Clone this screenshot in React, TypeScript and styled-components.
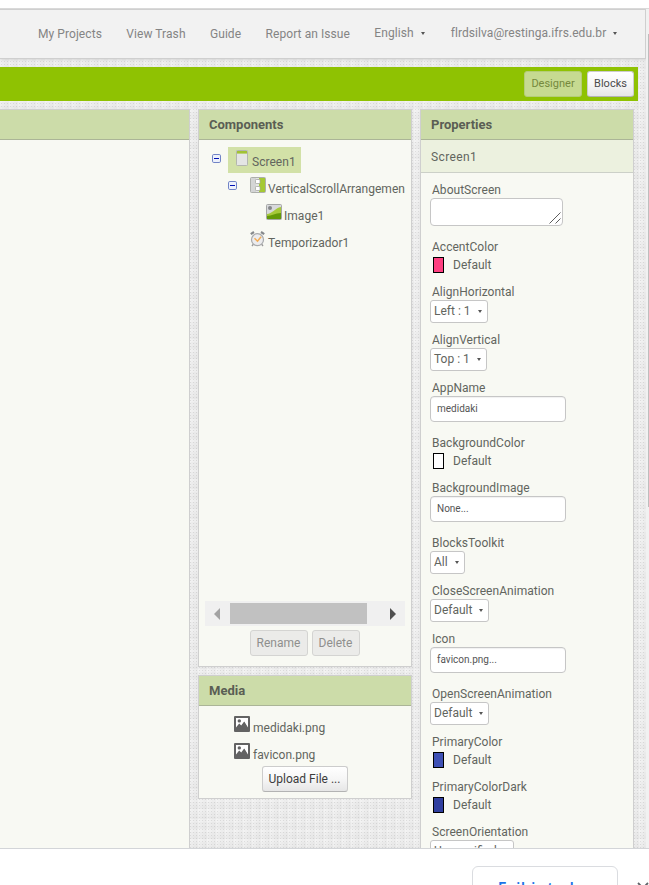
import React from 'react';
import styled, { createGlobalStyle, css } from 'styled-components';

const GlobalStyle = createGlobalStyle`
  * { box-sizing: border-box; }
  html, body { margin: 0; padding: 0; overflow: hidden; background: #fff; }
  body { font: 12px/18px Roboto, "Liberation Sans", sans-serif; color: #62655e; }
`;

const raisedButton = css`
  background: linear-gradient(#ffffff, #f6f6f6 50%, #e6e6e6);
  border: 1px solid #ccc;
  border-bottom-color: #b3b3b3;
  color: #3c3c3c;
`;

const Window = styled.div`
  display: flex;
  flex-direction: column;
  width: 649px;
  height: 885px;
  padding-top: 8px;
  overflow: hidden;
`;

const Viewport = styled.div`
  display: flex;
  flex: none;
  height: 841px;
  border-top: 1px solid #d9d9d9;
  border-bottom: 1px solid #d3d5d8;
  overflow: hidden;
`;

const Page = styled.div`
  width: 646px;
  background-color: #ececec;
  background-image:
    radial-gradient(circle at 1.5px 1.5px, rgba(0, 0, 0, 0.09) 0.7px, transparent 0.8px),
    repeating-linear-gradient(90deg, rgba(255, 255, 255, 0.2) 0 2px, transparent 2px 5px, rgba(0, 0, 0, 0.012) 5px 9px),
    repeating-linear-gradient(rgba(255, 255, 255, 0.2) 0 3px, transparent 3px 7px, rgba(0, 0, 0, 0.012) 7px 10px);
  background-size: 3px 3px, auto, auto;
  overflow: hidden;
`;

const ScrollTrack = styled.div`
  width: 3px;
  padding: 25px 0 0 2px;
  background: #f1f1f1;
`;

const ScrollThumb = styled.div`
  height: 473px;
  background: #bdbdbd;
`;

const TopBar = styled.nav`
  display: flex;
  align-items: center;
  width: 646px;
  height: 50px;
  padding-left: 38px;
  background: #f2f2f2;
  border: solid #cfcfcf;
  border-width: 1px 1px 1px 0;
  color: #848484;
  letter-spacing: 0.07px;
  box-shadow: 0 1px 3px rgba(0, 0, 0, 0.12);
`;

const NavLink = styled.a<{ $gap?: number; $menu?: boolean }>`
  display: flex;
  align-items: center;
  gap: 7px;
  margin-right: ${(p) => p.$gap ?? 24.4}px;
  padding-bottom: ${(p) => (p.$menu ? 2 : 0)}px;
  white-space: nowrap;
`;

const EditorBar = styled.header`
  display: flex;
  align-items: center;
  justify-content: flex-end;
  gap: 5px;
  width: 638px;
  height: 34px;
  margin-top: 8px;
  padding-right: 4px;
  background: #8fc202;
`;

const ViewButton = styled.button<{ $active?: boolean }>`
  width: ${(p) => (p.$active ? 58 : 47)}px;
  height: 26px;
  padding: 0 0 1px;
  ${raisedButton}
  border-radius: 3px;
  font: 11px/20px Roboto, sans-serif;
  color: #4a4a4a;
  ${(p) => p.$active && css`
    background: #c6da91;
    border-color: #b4cd78;
    color: #75893d;
  `}
`;

const Workspace = styled.main`
  display: flex;
  align-items: flex-start;
  gap: 8px;
  margin-top: 8px;
`;

const Column = styled.div`
  display: flex;
  flex-direction: column;
  gap: 8px;
`;

const Panel = styled.section<{ $w: number; $h: number; $flush?: boolean }>`
  width: ${(p) => p.$w}px;
  height: ${(p) => p.$h}px;
  background: #f8f9f3;
  border: 1px solid #cfcfcf;
  ${(p) => p.$flush && 'border-left: 0;'}
`;

const PanelTitle = styled.h2`
  height: 30px;
  margin: 0;
  padding: 0 10px;
  background: #ccdca9;
  border-bottom: 1px solid #abb597;
  font-size: 13px;
  line-height: 29px;
  font-weight: 700;
  color: #5a5e54;
`;

const PanelSubtitle = styled.div`
  height: 33px;
  padding-left: 10px;
  background: #ecf1df;
  border-bottom: 1px solid #ccd0c8;
  line-height: 34px;
  letter-spacing: 0.4px;
`;

const Tree = styled.div`
  height: 461px;
  padding-top: 6px;
  overflow: hidden;
`;

const TreeItem = styled.div<{ $indent: number }>`
  display: flex;
  align-items: center;
  height: 27px;
  padding-left: ${(p) => p.$indent}px;
  padding-right: 5px;
`;

const Toggle = styled.svg`
  flex: none;
  width: 9px;
  height: 9px;
  margin-right: 7px;
  margin-top: -3px;
`;

const NodeLabel = styled.span<{ $selected?: boolean }>`
  display: flex;
  align-items: center;
  height: 26px;
  overflow: hidden;
  padding: 0 5px 0 6px;
  background: ${(p) => (p.$selected ? '#d2e1a7' : 'transparent')};
  white-space: nowrap;

  svg { flex: none; width: 16px; height: 16px; margin: -4px 2px 0 0; }
  span { padding-top: 4px; letter-spacing: 0.03px; }
`;

const HorizontalScroll = styled.div`
  display: flex;
  align-items: center;
  width: 200px;
  height: 25px;
  margin-left: 6px;
  padding: 2px 8px 2px 9px;
  background: #f0f0f0;
`;

const HorizontalThumb = styled.div`
  width: 137px;
  height: 21px;
  margin: 0 23px 0 10px;
  background: #c1c1c1;
`;

const Actions = styled.div`
  display: flex;
  justify-content: center;
  gap: 4px;
  margin-top: 4px;
  padding-right: 1px;
`;

const ActionButton = styled.button<{ $w: number }>`
  width: ${(p) => p.$w}px;
  height: 26px;
  padding: 0 0 1px;
  ${raisedButton}
  border-radius: 3px;
  font: 12px/20px Roboto, sans-serif;
  white-space: nowrap;

  &:disabled {
    background: #ebebe9;
    border-color: #d4d4d2;
    color: #8f8f8d;
  }
`;

const MediaList = styled.div`
  padding: 8px 0 0 35px;
`;

const MediaItem = styled.div`
  display: flex;
  align-items: center;
  gap: 3px;
  height: 27px;

  svg { flex: none; margin-top: -8px; }
`;

const UploadRow = styled.div`
  display: flex;
  justify-content: center;
  margin-top: -2px;
  padding-right: 1px;
`;

const PropertyList = styled.div`
  padding: 7px 9px 0;
`;

const Property = styled.div<{ $h: number }>`
  height: ${(p) => p.$h}px;
`;

const PropertyName = styled.label`
  display: block;
  height: 18px;
  padding-left: 2px;
  line-height: 20px;
  letter-spacing: 0.03px;
`;

const TextArea = styled.div`
  display: flex;
  align-items: flex-end;
  justify-content: flex-end;
  width: 133px;
  height: 28px;
  padding: 1px;
  background: #fff;
  border: 1px solid #c6c6c6;
  border-radius: 4px;
`;

const TextBox = styled.div`
  width: 136px;
  height: 26px;
  padding-left: 6px;
  background: #fff;
  border: 1px solid #c6c6c6;
  border-radius: 4px;
  box-shadow: inset 0 1px 1px rgba(0, 0, 0, 0.06);
  font-size: 10px;
  line-height: 24px;
  color: #555;
`;

const SelectBox = styled.button`
  display: flex;
  align-items: center;
  gap: 7px;
  height: 23px;
  padding: 0 5px 1px 3px;
  background: #fff;
  border: 1px solid #c6c6c6;
  border-radius: 3px;
  font: 12px/18px Roboto, sans-serif;
  color: #62655e;
`;

const ColorValue = styled.div`
  display: flex;
  align-items: center;
  gap: 9px;
  height: 20px;
  padding-left: 3px;
`;

const Swatch = styled.span<{ $color: string }>`
  width: 11px;
  height: 16px;
  background: ${(p) => p.$color};
  border: 1px solid #000;
`;

const DownloadBar = styled.footer`
  display: flex;
  flex: none;
  align-items: flex-start;
  justify-content: flex-end;
  gap: 19px;
  height: 60px;
  padding: 17px 0 0;
  background: #fff;
`;

const ShowAll = styled.button`
  width: 146px;
  height: 42px;
  padding: 0;
  background: #fff;
  border: 1px solid #dadce0;
  border-radius: 6px;
  font: 600 16px/42px "Open Sans", sans-serif;
  letter-spacing: 0.25px;
  color: #1a73e8;
`;

const CloseIcon = styled.svg`
  width: 12px;
  height: 12px;
  margin-top: 16px;
`;

const Caret = () => (
  <svg width="4" height="3" viewBox="0 0 4 3"><path d="M0 0h4L2 3z" fill="#555" /></svg>
);

const Collapse = () => (
  <Toggle viewBox="0 0 9 9">
    <rect x=".5" y=".5" width="8" height="8" rx="1.3" fill="#edf1fb" stroke="#7184c6" />
    <path d="M2 4.5h5" stroke="#0011b5" />
  </Toggle>
);

const ScreenIcon = () => (
  <svg viewBox="0 0 16 16">
    <rect x="2.5" y=".5" width="11" height="15" rx=".8" fill="#e4e5e4" stroke="#b3b6af" />
    <path d="M3 1h10v2.6H3z" fill="#a1c333" />
  </svg>
);

const ArrangementIcon = () => (
  <svg viewBox="0 0 16 16">
    <rect x=".5" y=".5" width="15" height="15" rx="1" fill="#d4d5d5" stroke="#adafab" />
    <path d="M9 1h6v14H9z" fill="#a5c934" />
    <path d="M7.5 1v14" stroke="#e4e5e4" strokeWidth="3" />
    <rect x="5.5" y="2.5" width="4.5" height="4" rx=".8" fill="#fff" stroke="#a3a6a1" strokeWidth=".8" />
    <rect x="5.5" y="9.5" width="4.5" height="4" rx=".8" fill="#fff" stroke="#a3a6a1" strokeWidth=".8" />
  </svg>
);

const ImageIcon = () => (
  <svg viewBox="0 0 16 16">
    <rect x=".5" y=".5" width="15" height="15" rx="1" fill="#d8d9dc" stroke="#a5a7a5" />
    <circle cx="4" cy="4" r="2" fill="#858789" />
    <path d="M1 10c5 0 8-6 14-7v12H1z" fill="#a6c93a" />
    <path d="M1 12c5 0 8-3 14-3v6H1z" fill="#649a09" />
  </svg>
);

const ClockIcon = () => (
  <svg viewBox="0 0 16 16">
    <path d="M.8 3.2 4 1M11 1l3.2 2.2" stroke="#85888b" strokeWidth="2.2" />
    <path d="m3.5 13-1.5 2M11.5 13l1.5 2" stroke="#999" strokeWidth="1.3" />
    <circle cx="7.5" cy="8.7" r="6" fill="#ececee" stroke="#a8aaac" strokeWidth="1.2" />
    <path d="m4.5 7.2 3 3 3.6-4.4" fill="none" stroke="#f3ad55" strokeWidth="1.5" />
  </svg>
);

const MediaIcon = () => (
  <svg width="16" height="16" viewBox="0 0 16 16">
    <rect width="16" height="16" rx="1" fill="#636363" />
    <path d="M2 2h12v9.5l-3.8-6-3 4-2-2L2 11.5z" fill="#fff" />
    <path d="m2.5 12.5 2.8-4 2 2.5 3-5 3.5 6.5z" fill="#636363" />
    <circle cx="5.3" cy="4.9" r="1.7" fill="#636363" />
  </svg>
);

type PropertyItem = { name: string; kind: 'area' | 'color' | 'select' | 'text'; value: string; color?: string };

const properties: PropertyItem[] = [
  { name: 'AboutScreen', kind: 'area', value: '' },
  { name: 'AccentColor', kind: 'color', value: 'Default', color: '#ff4081' },
  { name: 'AlignHorizontal', kind: 'select', value: 'Left : 1' },
  { name: 'AlignVertical', kind: 'select', value: 'Top : 1' },
  { name: 'AppName', kind: 'text', value: 'medidaki' },
  { name: 'BackgroundColor', kind: 'color', value: 'Default', color: '#ffffff' },
  { name: 'BackgroundImage', kind: 'text', value: 'None...' },
  { name: 'BlocksToolkit', kind: 'select', value: 'All' },
  { name: 'CloseScreenAnimation', kind: 'select', value: 'Default' },
  { name: 'Icon', kind: 'text', value: 'favicon.png...' },
  { name: 'OpenScreenAnimation', kind: 'select', value: 'Default' },
  { name: 'PrimaryColor', kind: 'color', value: 'Default', color: '#3f51b5' },
  { name: 'PrimaryColorDark', kind: 'color', value: 'Default', color: '#303f9f' },
  { name: 'ScreenOrientation', kind: 'select', value: 'Unspecified' },
];

const rowHeight = { area: 57, color: 45, select: 48, text: 55 };

function Editor({ item }: { item: PropertyItem }) {
  switch (item.kind) {
    case 'area':
      return (
        <TextArea>
          <svg width="12" height="12" viewBox="0 0 12 12">
            <path d="M.5 11.5l11-11M6.5 11.5l5-5" stroke="#4b4b4b" strokeWidth=".9" />
          </svg>
        </TextArea>
      );
    case 'color':
      return <ColorValue><Swatch $color={item.color!} />{item.value}</ColorValue>;
    case 'select':
      return <SelectBox>{item.value}<Caret /></SelectBox>;
    default:
      return <TextBox>{item.value}</TextBox>;
  }
}

export default function App() {
  return (
    <Window>
      <GlobalStyle />
      <Viewport>
        <Page>
          <TopBar>
            <NavLink>My Projects</NavLink>
            <NavLink>View Trash</NavLink>
            <NavLink>Guide</NavLink>
            <NavLink>Report an Issue</NavLink>
            <NavLink $menu $gap={26}>English <Caret /></NavLink>
            <NavLink $menu $gap={0}>flrdsilva@restinga.ifrs.edu.br <Caret /></NavLink>
          </TopBar>
          <EditorBar>
            <ViewButton $active>Designer</ViewButton>
            <ViewButton>Blocks</ViewButton>
          </EditorBar>
          <Workspace>
            <Panel $w={190} $h={760} $flush><PanelTitle /></Panel>
            <Column>
              <Panel $w={214} $h={558}>
                <PanelTitle>Components</PanelTitle>
                <Tree>
                  <TreeItem $indent={13}>
                    <Collapse />
                    <NodeLabel $selected><ScreenIcon /><span>Screen1</span></NodeLabel>
                  </TreeItem>
                  <TreeItem $indent={29}>
                    <Collapse />
                    <NodeLabel><ArrangementIcon /><span>VerticalScrollArrangemen</span></NodeLabel>
                  </TreeItem>
                  <TreeItem $indent={61}>
                    <NodeLabel><ImageIcon /><span>Image1</span></NodeLabel>
                  </TreeItem>
                  <TreeItem $indent={45}>
                    <NodeLabel><ClockIcon /><span>Temporizador1</span></NodeLabel>
                  </TreeItem>
                </Tree>
                <HorizontalScroll>
                  <svg width="6" height="12" viewBox="0 0 6 12"><path d="M6 0v12L0 6z" fill="#a3a3a3" /></svg>
                  <HorizontalThumb />
                  <svg width="6" height="12" viewBox="0 0 6 12"><path d="M0 0v12l6-6z" fill="#505050" /></svg>
                </HorizontalScroll>
                <Actions>
                  <ActionButton $w={58} disabled>Rename</ActionButton>
                  <ActionButton $w={48} disabled>Delete</ActionButton>
                </Actions>
              </Panel>
              <Panel $w={214} $h={124}>
                <PanelTitle>Media</PanelTitle>
                <MediaList>
                  <MediaItem><MediaIcon />medidaki.png</MediaItem>
                  <MediaItem><MediaIcon />favicon.png</MediaItem>
                </MediaList>
                <UploadRow><ActionButton $w={86}>Upload File ...</ActionButton></UploadRow>
              </Panel>
            </Column>
            <Panel $w={214} $h={760}>
              <PanelTitle>Properties</PanelTitle>
              <PanelSubtitle>Screen1</PanelSubtitle>
              <PropertyList>
                {properties.map((item) => (
                  <Property key={item.name} $h={rowHeight[item.kind]}>
                    <PropertyName>{item.name}</PropertyName>
                    <Editor item={item} />
                  </Property>
                ))}
              </PropertyList>
            </Panel>
          </Workspace>
        </Page>
        <ScrollTrack><ScrollThumb /></ScrollTrack>
      </Viewport>
      <DownloadBar>
        <ShowAll>Exibir todos</ShowAll>
        <CloseIcon viewBox="0 0 12 12"><path d="m1 1 10 10M11 1 1 11" stroke="#5f6368" strokeWidth="1.8" /></CloseIcon>
      </DownloadBar>
    </Window>
  );
}
